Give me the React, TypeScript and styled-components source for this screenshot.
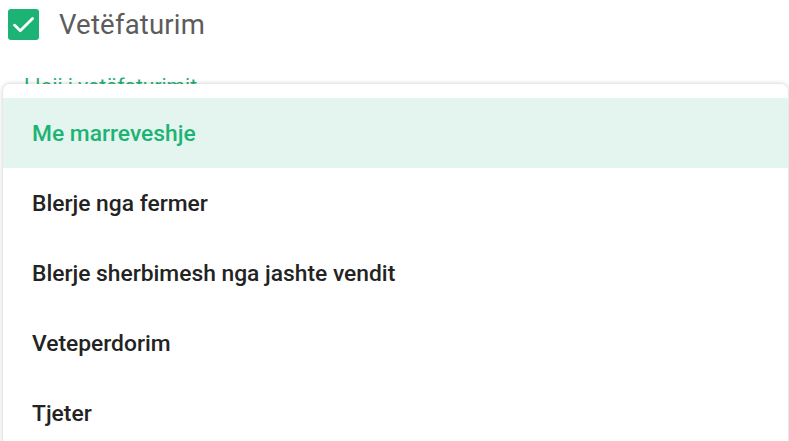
import React, { useState } from 'react'
import styled, { createGlobalStyle } from 'styled-components'

const GlobalStyle = createGlobalStyle`
  html, body {
    margin: 0;
    padding: 0;
    background: #ffffff;
    font-family: Roboto, "Liberation Sans", sans-serif;
    overflow: hidden;
  }
`

const green = '#1db374'

const Page = styled.div`
  position: relative;
  width: 789px;
  height: 441px;
  padding: 8px 0 0 8px;
  box-sizing: border-box;
`

const CheckRow = styled.label`
  display: flex;
  align-items: center;
  gap: 20px;
  height: 32px;
`

const CheckBox = styled.span`
  display: flex;
  align-items: center;
  justify-content: center;
  width: 31px;
  height: 31px;
  border-radius: 3px;
  background: ${green};
`

const CheckLabel = styled.span`
  font-size: 27.5px;
  color: #5c5c5c;
  letter-spacing: 0.2px;
`

const FieldLabel = styled.div`
  margin: 34px 0 0 16px;
  font-size: 21px;
  color: ${green};
`

const Menu = styled.ul`
  position: absolute;
  top: 84px;
  left: 3px;
  right: 1px;
  margin: 0;
  padding: 14px 0 0;
  list-style: none;
  background: #ffffff;
  border-radius: 7px 7px 0 0;
  box-shadow: 0 0 5px rgba(0, 0, 0, 0.22);
`

const Item = styled.li<{ $active?: boolean }>`
  display: flex;
  align-items: center;
  height: 70px;
  padding-left: 29px;
  font-size: 22.8px;
  font-weight: 500;
  color: ${p => (p.$active ? green : '#232323')};
  background: ${p => (p.$active ? '#e3f5ee' : 'transparent')};
  cursor: pointer;
`

const options = [
  'Me marreveshje',
  'Blerje nga fermer',
  'Blerje sherbimesh nga jashte vendit',
  'Veteperdorim',
  'Tjeter',
]

const App = () => {
  const [selected, setSelected] = useState(0)

  return (
    <Page>
      <GlobalStyle />
      <CheckRow>
        <CheckBox>
          <svg width="29" height="29" viewBox="0 0 24 24" fill="none">
            <path d="M4.5 12.5l4.8 4.6L19.5 7" stroke="#fff" strokeWidth="2.3" strokeLinecap="round" strokeLinejoin="round" />
          </svg>
        </CheckBox>
        <CheckLabel>Vetëfaturim</CheckLabel>
      </CheckRow>
      <FieldLabel>Lloji i vetëfaturimit</FieldLabel>
      <Menu>
        {options.map((o, i) => (
          <Item key={o} $active={i == selected} onClick={() => setSelected(i)}>
            {o}
          </Item>
        ))}
      </Menu>
    </Page>
  )
}

export default App
